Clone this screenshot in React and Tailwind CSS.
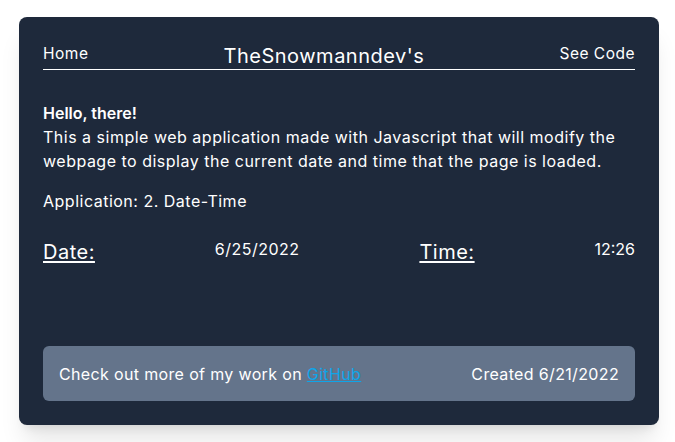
import React from 'react';

export default function App() {
  return (
    <div className="min-h-[442px] bg-white pt-[17px] pl-[19px] font-['Inter',sans-serif] text-white">
      <div className="flex h-[408px] w-[640px] flex-col rounded-lg bg-[#1e293b] px-6 pt-[21px] pb-6 shadow-xl">
        <nav className="flex items-end justify-between border-b border-white pb-[3px] tracking-[0.5px]">
          <a className="text-[15.5px] leading-6">Home</a>
          <h1 className="translate-y-[4px] text-[20px] leading-7 tracking-[0.5px]">TheSnowmanndev's</h1>
          <a className="text-[15.5px] leading-6">See Code</a>
        </nav>

        <section className="mt-[31px] text-[16px] leading-6 tracking-[0.5px]">
          <p className="font-semibold tracking-normal">Hello, there!</p>
          <p>
            This a simple web application made with Javascript that will modify the webpage to display the current date
            and time that the page is loaded.
          </p>
          <p className="mt-4">Application: 2. Date-Time</p>
        </section>

        <div className="mt-[22px] flex items-start justify-between">
          <span className="translate-y-[3px] text-[20px] leading-7 tracking-[0.5px] underline underline-offset-2">Date:</span>
          <span className="translate-y-[2px] text-[16px] leading-6 tracking-[0.5px]">6/25/2022</span>
          <span className="translate-y-[3px] text-[20px] leading-7 tracking-[0.5px] underline underline-offset-2">Time:</span>
          <span className="translate-y-[2px] text-[16px] leading-6">12:26</span>
        </div>

        <footer className="mt-auto flex h-[55px] items-center justify-between rounded-md bg-[#64748b] px-4 text-[16px] tracking-[0.35px]">
          <p>
            Check out more of my work on{' '}
            <a href="#" className="text-[#0ea5e9] underline">
              GitHub
            </a>
          </p>
          <p>Created 6/21/2022</p>
        </footer>
      </div>
    </div>
  );
}
